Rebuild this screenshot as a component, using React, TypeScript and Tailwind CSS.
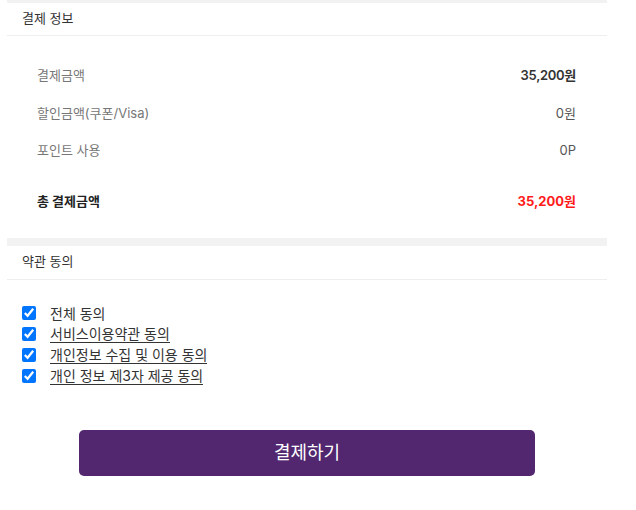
import React from 'react';

const rows = [
  { label: '결제금액', value: '35,200원', strong: true },
  { label: '할인금액(쿠폰/Visa)', value: '0원', strong: false },
  { label: '포인트 사용', value: '0P', strong: false },
];

const terms = [
  { label: '전체 동의', underline: false },
  { label: '서비스이용약관 동의', underline: true },
  { label: '개인정보 수집 및 이용 동의', underline: true },
  { label: '개인 정보 제3자 제공 동의', underline: true },
];

const font = { fontFamily: 'Inter, "Noto Sans CJK KR", sans-serif' };

const App: React.FC = () => {
  return (
    <div className="w-[636px] h-[510px] bg-white" style={font}>
      <div className="ml-[7px] w-[600px]">
        {/* 결제 정보 */}
        <div className="h-[3px] bg-[#f2f2f2]" />
        <div className="h-[33px] flex items-center pl-[15px] border-b border-[#eeeeee] text-[13px] text-[#333]">
          결제 정보
        </div>
        <div className="pt-[21px] pl-[30px] pr-[31px]">
          {rows.map((row) => (
            <div key={row.label} className="h-[37.5px] flex items-center justify-between text-[13px]">
              <span className="text-[#777]">{row.label}</span>
              <span className={row.strong ? 'font-semibold text-[#333] tracking-[-0.3px]' : 'text-[#555]'}>{row.value}</span>
            </div>
          ))}
          <div className="mt-[14px] h-[37px] flex items-center justify-between text-[13px] font-bold">
            <span className="text-[#222]">총 결제금액</span>
            <span className="text-[#ff1a1a]">35,200원</span>
          </div>
        </div>

        {/* 약관 동의 */}
        <div className="mt-[17px] h-[8px] bg-[#f2f2f2]" />
        <div className="h-[34px] flex items-center pl-[15px] border-b border-[#eeeeee] text-[13px] text-[#333]">
          약관 동의
        </div>
        <div className="pt-[23px] pl-[15px] flex flex-col">
          {terms.map((t) => (
            <label key={t.label} className="h-[21px] flex items-center gap-[14px] text-[14px] text-[#333]">
              <input type="checkbox" defaultChecked className="w-[14px] h-[14px] m-0 accent-[#0075ff]" />
              <span className={t.underline ? 'border-b border-[#333] leading-[17px]' : 'leading-[17px]'}>{t.label}</span>
            </label>
          ))}
        </div>

        <div className="mt-[43px] pl-[72px]">
          <button className="w-[456px] h-[46px] rounded-[5px] bg-[#52276f] text-white text-[18px]">
            결제하기
          </button>
        </div>
      </div>
    </div>
  );
};

export default App;
